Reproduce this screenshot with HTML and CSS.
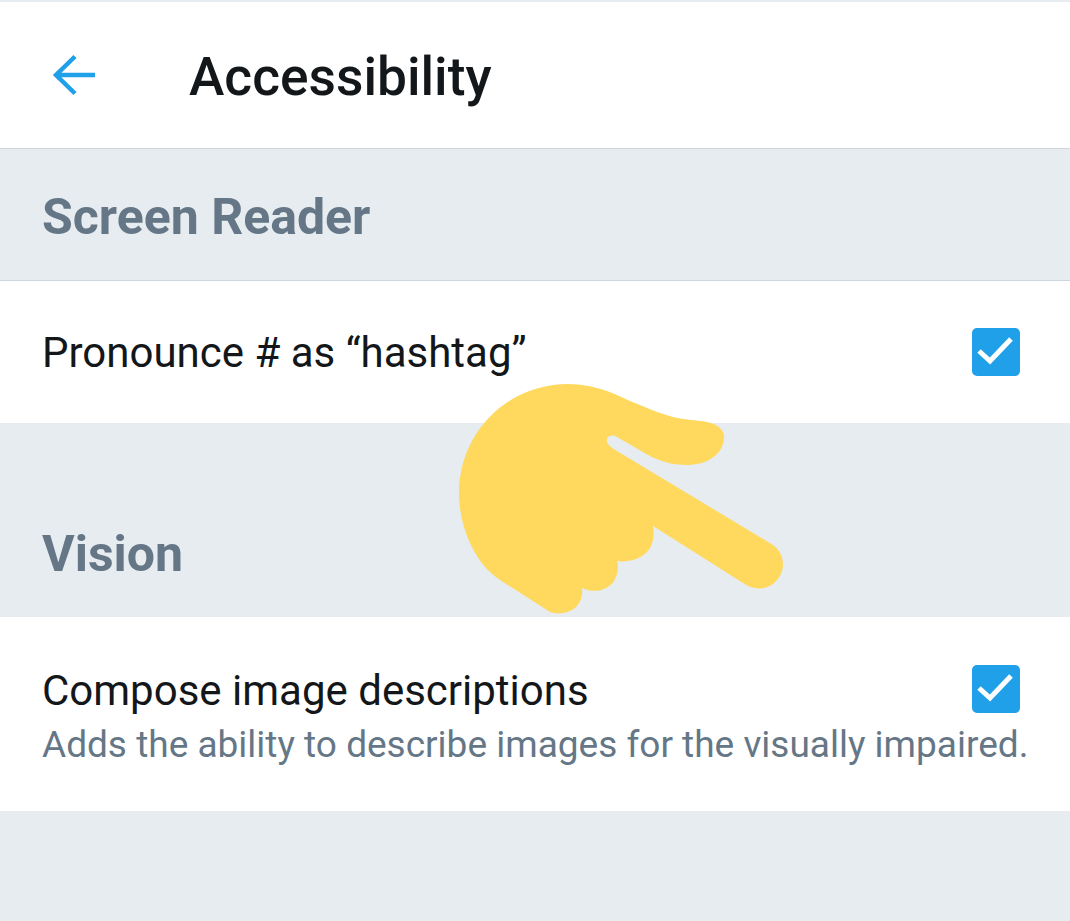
FILE: index.html
```html
<!DOCTYPE html>
<html lang="en">
<head>
    <meta charset="UTF-8">
    <title>Accessibility</title>
    <link rel="stylesheet" href="styles.css">
</head>
<body>

    <div class="screen">
        <!-- Top bar -->
        <div class="top-bar">
            <svg class="back-arrow" width="44" height="44" viewBox="0 0 44 44">
                <path d="M43 22H4M23 3.500L4 22L23 40.500" fill="none" stroke="#1fa0e8" stroke-width="4.500"/>
            </svg>
            <h1>Accessibility</h1>
        </div>

        <!-- Screen reader -->
        <div class="section-head first">
            <h2>Screen Reader</h2>
        </div>
        <div class="row single">
            <div class="row-text">
                <div class="row-title">Pronounce # as “hashtag”</div>
            </div>
            <svg class="check" width="48" height="48" viewBox="0 0 48 48">
                <rect width="48" height="48" rx="5" fill="#1fa0e8"/>
                <path d="M7 23L18 33L39 11" fill="none" stroke="#fff" stroke-width="5"/>
            </svg>
        </div>

        <!-- Vision -->
        <div class="section-head second">
            <h2>Vision</h2>
        </div>
        <div class="row double">
            <div class="row-text">
                <div class="row-title">Compose image descriptions</div>
                <div class="row-sub">Adds the ability to describe images for the visually impaired.</div>
            </div>
            <svg class="check" width="48" height="48" viewBox="0 0 48 48">
                <rect width="48" height="48" rx="5" fill="#1fa0e8"/>
                <path d="M7 23L18 33L39 11" fill="none" stroke="#fff" stroke-width="5"/>
            </svg>
        </div>

        <!-- Pointing hand sticker -->
        <svg class="hand" width="360" height="250" viewBox="0 0 360 250">
            <path fill="#ffd95e" d="M128 14C142 14 155 17 167 21C178 25 189 31 200 35C211 40 222 44 233 47C245 50 256 50 267 52C278 54 284 60 284 67C284 76 279 84 272 88C265 93 256 95 246 95C232 95 219 91 208 85C196 78 186 72 177 67C172 64 168 66 167 69C166 72 168 75 172 78L333 175C340 180 343 187 343 195C343 202 339 209 333 214C325 220 312 220 303 213L213 156C214 163 214 169 211 176C206 187 192 193 177 191C179 197 178 204 174 211C168 220 155 224 142 218C143 225 141 232 136 237C130 243 118 245 110 242L60 210C34 193 19 156 19 123C19 62 68 14 128 14Z"/>
        </svg>
    </div>

</body>
</html>
```

FILE: styles.css
```css
/* Settings screen */
body {
    margin: 0;
    font-family: 'Roboto', 'Liberation Sans', sans-serif;
    background-color: #e6ecf0;
}

.screen {
    position: relative;
    height: 921px;
    padding-top: 2px;
    box-sizing: border-box;
    overflow: hidden;
}

/* Top bar */
.top-bar {
    display: flex;
    align-items: center;
    height: 146px;
    background-color: #fff;
    border-bottom: 1px solid #ccd6dd;
    box-sizing: content-box;
}

.back-arrow {
    margin-left: 52px;
}

h1 {
    margin: 4px 0 0 93px;
    font-size: 53.3px;
    font-weight: 500;
    color: #14171a;
}

/* Section headers */
.section-head {
    display: flex;
    padding-left: 42px;
    border-bottom: 1px solid #ccd6dd;
    box-sizing: border-box;
}

.section-head.first {
    height: 132px;
    align-items: center;
    padding-top: 4px;
}

.section-head.second {
    height: 194px;
    align-items: flex-end;
    padding-bottom: 35px;
    border-bottom: none;
}

h2 {
    margin: 0;
    font-size: 50px;
    font-weight: 700;
    line-height: 56px;
    color: #657786;
}

/* Rows */
.row {
    display: flex;
    justify-content: space-between;
    background-color: #fff;
    padding: 0 50px 0 42px;
}

.row.single {
    height: 142px;
    align-items: center;
}

.row.double {
    height: 194px;
    padding-top: 48px;
    box-sizing: border-box;
}

.row-text {
    min-width: 0;
}

.row-title {
    font-size: 42px;
    line-height: 48px;
    margin-top: 2px;
    color: #14171a;
    white-space: nowrap;
}

.row-sub {
    font-size: 37px;
    line-height: 48px;
    margin-top: 6px;
    color: #657786;
    white-space: nowrap;
}

.check {
    flex-shrink: 0;
}

/* Hand lies over the rows */
.hand {
    position: absolute;
    left: 440px;
    top: 370px;
}
```
